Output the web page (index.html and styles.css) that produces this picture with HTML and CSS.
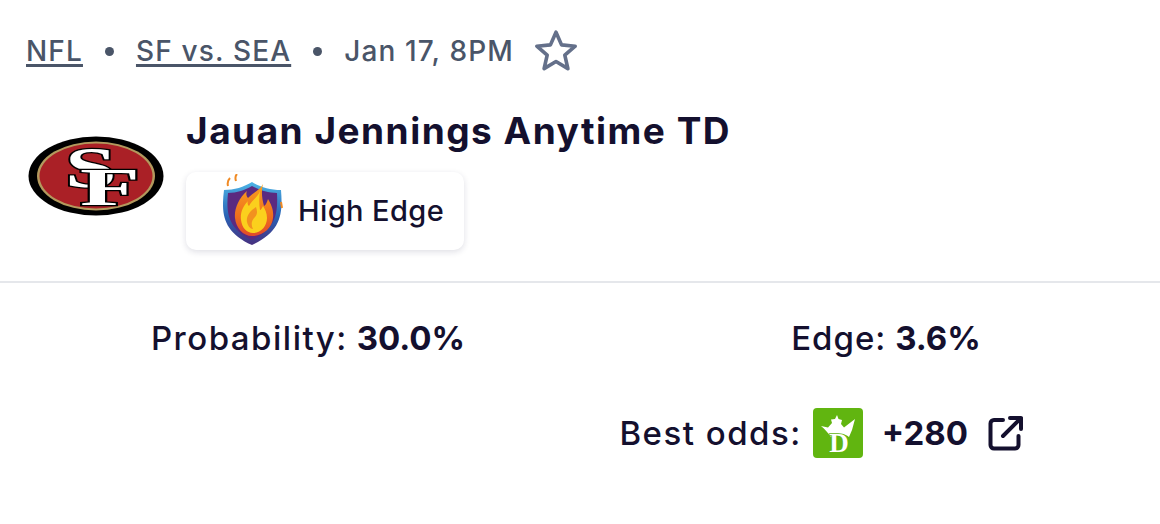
FILE: index.html
```html
<!DOCTYPE html>
<html lang="en">
<head>
<meta charset="utf-8">
<title>Jauan Jennings Anytime TD</title>
<link rel="stylesheet" href="styles.css">
</head>
<body>
<main class="card">
  <div class="meta">
    <a class="meta-link" href="#">NFL</a>
    <span class="dot"></span>
    <a class="meta-link" href="#">SF vs. SEA</a>
    <span class="dot"></span>
    <span>Jan 17, 8PM</span>
    <svg class="star" viewBox="0 0 24 24" fill="none" stroke="#64708a" stroke-width="1.9" stroke-linejoin="round"><path d="M12 2.2l2.9 6.6 7.1.7-5.4 4.7 1.6 7-6.2-3.7-6.2 3.7 1.6-7L2 9.5l7.100-.7z"/></svg>
  </div>
  <div class="head">
    <svg class="team" viewBox="0 0 136 80">
      <ellipse cx="68" cy="40" rx="67.500" ry="39.500" fill="#000"/>
      <ellipse cx="68" cy="40" rx="59" ry="34.500" fill="#b3995d"/>
      <ellipse cx="68" cy="40" rx="56.500" ry="32.500" fill="#aa2026"/>
      <text class="logo-s" transform="translate(37 51) scale(1.600 1)">S</text>
      <text class="logo-f" transform="translate(52 69) scale(1.850 1)">F</text>
    </svg>
    <div class="head-text">
      <h1 class="title">Jauan Jennings Anytime TD</h1>
      <div class="badge">
        <svg class="shield" viewBox="0 0 60 72">
          <defs>
            <linearGradient id="rim" x1="0" y1="0" x2="0" y2="1"><stop offset="0" stop-color="#4db4e6"/><stop offset=".55" stop-color="#2a62b4"/><stop offset="1" stop-color="#47307f"/></linearGradient>
            <linearGradient id="flame" x1="0" y1="0" x2="0" y2="1"><stop offset="0" stop-color="#f7a11f"/><stop offset=".6" stop-color="#f0701e"/><stop offset="1" stop-color="#e14a2a"/></linearGradient>
          </defs>
          <path d="M29 8c8 5 18 8 29 8 2 24 0 42-29 55C0 58-2 40 1 16c10 0 20-3 28-8z" fill="url(#rim)"/>
          <path d="M29 12c7 4 16 7 25 7 1 20-1 36-25 47C5 55 3 39 5 19c9 0 17-3 24-7z" fill="#5b2a80"/>
          <path d="M40 10c-3 6-10 9-15 14-2-2-2-5-1-7-8 7-13 18-12 27 1 10 8 18 17 18 11 0 20-8 21-18 1-8-2-14-5-19-1 3-2 6-4 7-2-7-3-15-1-22z" fill="url(#flame)"/>
          <path d="M37 17c-2 6-8 9-11 15-1-1-2-3-1-5-5 5-8 12-7 19 1 8 6 13 12 13 8 0 14-7 14-15 0-5-2-9-4-12-1 2-2 4-3 4-1-6-1-13 0-19z" fill="#fbd01d"/>
          <path d="M33 33c-6 4-10 9-9 15 1 4 3 7 6 7-2-4-2-8 2-12 3-3 2-7 1-10z" fill="#f2911f"/>
          <path d="M7 4C5 6 4 8 5 12M14 0c-2 2-2 4-1 7M58 28l1 6" fill="none" stroke="#f08a24" stroke-width="2"/>
        </svg>
        <span>High Edge</span>
      </div>
    </div>
  </div>
  <hr class="rule">
  <div class="stats">
    <p class="stat"><span class="label-wide">Probability:</span> <b>30.0%</b></p>
    <p class="stat"><span class="label-tight">Edge:</span> <b>3.6%</b></p>
  </div>
  <div class="odds">
    <span class="label-odds">Best odds:</span>
    <svg class="book" viewBox="0 0 50 50">
      <rect width="50" height="50" rx="4" fill="#61b510"/>
      <path d="M8 18L15 19.500 19 15 18 11.500 22 11 24 7 25.500 11 29 12 28 16 31 19.500 42 11 39 22 36 29C32 25 22 25 18 29 15 25 12 21 8 18Z" fill="#fff"/>
      <text class="logo-d" x="26" y="44" text-anchor="middle">D</text>
    </svg>
    <b class="price">+280</b>
    <svg class="ext" viewBox="0 0 36 36" fill="none" stroke="#14102e" stroke-width="4" stroke-linecap="round" stroke-linejoin="round"><path d="M15 5H6a3.500 3.500 0 0 0-3.500 3.500v21.500a3.500 3.500 0 0 0 3.500 3.500h21a3.500 3.500 0 0 0 3.500-3.500v-9M15 21L33 3M22 3h11v11"/></svg>
  </div>
</main>
</body>
</html>
```
FILE: styles.css
```css
* { box-sizing: border-box; }
html, body { margin: 0; background: #fff; }
body { font-family: "Inter", "Liberation Sans", sans-serif; color: #14102e; }
.card { width: 1160px; }
.meta {
  display: flex; align-items: center; height: 50px; margin-top: 26px; padding-left: 26px;
  font-family: "Inter", sans-serif; font-size: 28px; font-weight: 450; letter-spacing: 1.150px; color: #4a5568;
}
.meta-link { color: #4a5568; text-decoration: underline; text-decoration-thickness: 3px; text-underline-offset: 3px; }
.dot { width: 9px; height: 9px; margin: 0 22px; border-radius: 50%; background: #4a5568; }
.star { width: 46px; height: 46px; margin-left: 19px; }
.head { display: flex; margin-top: 30px; padding-left: 28px; height: 175px; }
.team { width: 136px; height: 80px; margin-top: 30px; flex: none; }
.head-text { margin-left: 22px; }
.title { margin: 0; font-size: 37px; line-height: 44px; font-weight: 700; letter-spacing: 1.500px; margin-top: 3px; }
.badge {
  display: flex; align-items: center; width: 278px; height: 78px; margin-top: 19px; padding: 0 0 2px 37px; gap: 15px;
  border-radius: 10px; background: #fff; font-size: 29px; font-weight: 450; letter-spacing: .4px;
  box-shadow: 0 2px 6px rgba(30, 30, 70, .14);
}
.shield { width: 60px; height: 72px; flex: none; }
.rule { margin: 0; border: 0; border-top: 2px solid #e5e7eb; }
.stats { display: grid; grid-template-columns: 578px 578px; padding-left: 19px; margin-top: 33px; }
.stat { margin: 0; text-align: center; font-size: 33px; font-weight: 450; line-height: 44px; }
.stat b { font-weight: 700; }
.label-wide { letter-spacing: 1.500px; }
.label-tight { letter-spacing: 1px; }
.label-odds { letter-spacing: 1.500px; }
.odds {
  display: flex; align-items: center; justify-content: flex-end; height: 50px; margin-top: 48px; padding-right: 136px; font-size: 33px; font-weight: 450;
}
.book { width: 50px; height: 50px; margin: 0 19px 0 11px; }
.price { font-weight: 700; }
.ext { width: 36px; height: 36px; margin-left: 20px; }
.logo-s { font: 700 58px "Liberation Serif", serif; fill: #fff; stroke: #000; stroke-width: 2.500; paint-order: stroke; }
.logo-f { font: 700 53px "Liberation Serif", serif; fill: #fff; stroke: #000; stroke-width: 2.500; paint-order: stroke; }
.logo-d { font: 700 27px "Liberation Serif", serif; fill: #fff; stroke: #61b510; stroke-width: 1.500; paint-order: stroke; }
```
